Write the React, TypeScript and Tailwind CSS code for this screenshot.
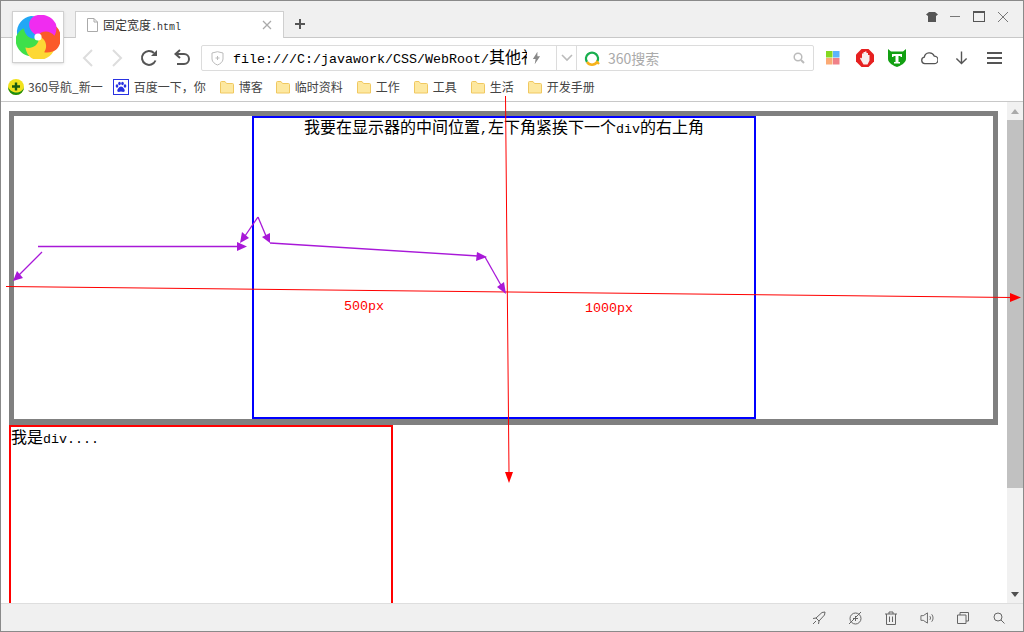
import React from 'react';

const cjk = { fontFamily: '"Noto Sans CJK SC", sans-serif' };

function Logo() {
	const colors = ['#f02cf0', '#fb5a2a', '#fdd835', '#3fe04a', '#22a7f5'];
	return (
		<svg width="44" height="44" viewBox="-22 -22 44 44">
			{[4, 3, 2, 1, 0].map((i) => (
				<path
					key={i}
					transform={`rotate(${i * 72 - 18})`}
					fill={colors[i]}
					d="M0 -1 C -8 -9 -6 -19 3 -21 C 12 -22 20 -15 21 -7 C 21 -3 19 1 16 4 C 14 -2 6 -6 0 -1Z"
				/>
			))}
			<circle r="3.600" fill="#fff" />
		</svg>
	);
}

function Folder() {
	return (
		<svg width="16" height="14" viewBox="0 0 16 14" className="shrink-0">
			<path d="M1.500 13V2.500A1 1 0 0 1 2.500 1.500H6L7.500 3.500H13.500A1 1 0 0 1 14.500 4.500V13Z" fill="#fde8a0" stroke="#f0c860" />
		</svg>
	);
}

function Bookmark({ icon, text, className }: any) {
	return (
		<div className={`flex items-center ${className}`}>
			{icon}
			<span className="text-[12px] leading-none text-[#444] whitespace-nowrap ml-[4px]" style={cjk}>
				{text}
			</span>
		</div>
	);
}

function Annotations() {
	const purple = '#a818d8';
	const head = (pts: string, color: string) => <polygon points={pts} fill={color} />;
	return (
		<svg className="absolute -left-px -top-px pointer-events-none" width="1024" height="632">
			<g stroke="#ff0000" strokeWidth="1" fill="none">
				<line x1="6" y1="286.500" x2="1011" y2="297.500" />
				<line x1="505.500" y1="96" x2="509" y2="473" />
			</g>
			{head('1021,297.500 1010,293 1010,302', '#ff0000')}
			{head('509,483 505,472 513,472', '#ff0000')}
			<g stroke={purple} strokeWidth="1.300" fill="none">
				<line x1="38" y1="246.500" x2="240" y2="246.500" />
				<line x1="42" y1="252" x2="18" y2="276" />
				<line x1="258" y1="217" x2="245" y2="236" />
				<line x1="258" y1="217" x2="266" y2="236" />
				<line x1="270" y1="243" x2="478" y2="256" />
				<line x1="485" y1="257" x2="502" y2="287" />
			</g>
			{head('247,246.500 237,242 237,251', purple)}
			{head('13,281 17,271 23,278', purple)}
			{head('240,243 242,232 249,238', purple)}
			{head('270,243 262,237 270,233', purple)}
			{head('487,257 476,261 477,252', purple)}
			{head('506,294 497,287 504,282', purple)}
		</svg>
	);
}

export default function App() {
	return (
		<div className="relative w-[1024px] h-[632px] overflow-hidden bg-white border border-[#8a8a8a] flex flex-col" style={{ fontFamily: '"Liberation Mono", "Noto Sans CJK SC", monospace' }}>
			{/* tab strip */}
			<div className="h-[37px] shrink-0 bg-[#f0f0f0] border-b border-[#c8c8c8] flex items-end pl-[74px]">
				<div className="w-[209px] h-[27px] bg-white border border-b-0 border-[#cfcfcf] flex items-center pl-[10px] pr-[11px] -mb-px">
					<svg width="13" height="14" viewBox="0 0 13 14" fill="none">
						<path d="M1.500 .5H8L11.500 4V13.500H1.500ZM8 .5V4H11.500" stroke="#aaa" />
					</svg>
					<span className="ml-[4px] text-[12px] text-[#333] whitespace-nowrap" style={cjk}>固定宽度<span className="font-['Liberation_Mono'] text-[10px]">.html</span></span>
					<svg width="10" height="10" viewBox="0 0 10 10" className="ml-auto">
						<path d="M1 1L9 9M9 1L1 9" stroke="#aaa" strokeWidth="1.300" />
					</svg>
				</div>
				<svg width="12" height="12" viewBox="0 0 12 12" className="ml-[10px] mb-[7px]">
					<path d="M6 1V11M1 6H11" stroke="#555" strokeWidth="2" />
				</svg>
				<div className="ml-auto mr-[15px] mb-[15px] flex items-center self-end">
					<svg width="12" height="10" viewBox="0 0 12 10"><path d="M3 0H9L12 2.500L10 4V10H2V4L0 2.500Z" fill="#555" /></svg>
					<div className="ml-[12px] w-[10px] h-px bg-[#777]" />
					<div className="ml-[13px] w-[12px] h-[11px] border border-t-2 border-[#555]" />
					<svg width="10" height="10" viewBox="0 0 10 10" className="ml-[13px]"><path d="M0 0L10 10M10 0L0 10" stroke="#777" /></svg>
				</div>
			</div>
			{/* logo sits over the tabs */}
			<div className="absolute left-[11px] top-[10px] w-[52px] h-[52px] bg-white border border-[#d0d0d0] shadow-sm flex items-center justify-center">
				<Logo />
			</div>
			{/* toolbar */}
			<div className="h-[34px] shrink-0 flex items-center pt-[6px]">
				<div className="flex items-center ml-[79px]">
					<svg width="16" height="18" viewBox="0 0 16 18"><path d="M12 1L4 9L12 17" fill="none" stroke="#ddd" strokeWidth="2" /></svg>
					<svg width="16" height="18" viewBox="0 0 16 18" className="ml-[13px]"><path d="M4 1L12 9L4 17" fill="none" stroke="#ddd" strokeWidth="2" /></svg>
					<svg width="18" height="18" viewBox="0 0 18 18" className="ml-[15px]"><path d="M15.500 11.500A7 7 0 1 1 14 4" fill="none" stroke="#555" strokeWidth="2" /><path d="M17 1V7H11Z" fill="#555" /></svg>
					<svg width="18" height="18" viewBox="0 0 18 18" className="ml-[15px]"><path d="M3 5H11A5 5 0 0 1 11 15H4" fill="none" stroke="#555" strokeWidth="2" /><path d="M7 1L2.500 5L7 9" fill="none" stroke="#555" strokeWidth="2" /></svg>
				</div>
				<div className="ml-[10px] w-[613px] h-[26px] border border-[#dcdcdc] rounded-[2px] flex items-center overflow-hidden">
					<div className="w-[354px] flex items-center pl-[9px] shrink-0 overflow-hidden">
						<svg width="13" height="15" viewBox="0 0 13 15" className="shrink-0"><path d="M1 2L6.500 .7L12 2V8C12 11 9 13 6.500 14C4 13 1 11 1 8Z" fill="none" stroke="#bbb" /><path d="M4.500 7H8.500M6.500 5V9" stroke="#bbb" /></svg>
						<div className="ml-[9px] w-[294px] shrink-0 overflow-hidden text-[13.330px] leading-[20px] text-black whitespace-nowrap">file:///C:/javawork/CSS/WebRoot/<span className="text-[16px]" style={cjk}>其他礼</span></div>
						<svg width="9" height="14" viewBox="0 0 10 14" className="ml-[5px] shrink-0"><path d="M6 0L1 8H4L3 14L9 5H6Z" fill="#888" /></svg>
					</div>
					<div className="w-[21px] h-full border-x border-[#dcdcdc] flex items-center justify-center shrink-0">
						<svg width="12" height="8" viewBox="0 0 12 8"><path d="M1 1L6 6L11 1" fill="none" stroke="#bbb" strokeWidth="1.600" /></svg>
					</div>
					<div className="flex-1 flex items-center pl-[7px] pr-[8px]">
						<svg width="16" height="16" viewBox="0 0 16 16">
							<path d="M13 12A6 6 0 1 0 3 12" fill="none" stroke="#1aaf50" strokeWidth="2.400" />
							<path d="M3 12A6 6 0 0 0 13 12L15 14" fill="none" stroke="#f6b21a" strokeWidth="2.400" />
						</svg>
						<span className="ml-[8px] text-[14px] leading-none text-[#aaa]" style={cjk}>360搜索</span>
						<svg width="12" height="12" viewBox="0 0 12 12" className="ml-auto"><circle cx="5" cy="5" r="3.800" fill="none" stroke="#bbb" strokeWidth="1.500" /><path d="M8 8L11 11" stroke="#bbb" strokeWidth="2" /></svg>
					</div>
				</div>
				<div className="ml-[12px] flex items-center">
					<svg width="14" height="14" viewBox="0 0 14 14"><rect width="6.500" height="6.500" fill="#84d820" /><rect x="7" width="6.500" height="6.500" fill="#5cb4fa" /><rect y="7" width="6.500" height="6.500" fill="#fbaa74" /><rect x="7" y="7" width="6.500" height="6.500" fill="#f08088" /></svg>
					<svg width="18" height="18" viewBox="0 0 18 18" className="ml-[16px]"><path d="M5.500 0H12.500L18 5.500V12.500L12.500 18H5.500L0 12.500V5.500Z" fill="#e62020" /><path d="M4 9.500L5 8.500L6 9.500V4.500H7.500V3H9V2.500H10.500V4H12V6H13.500V11.500L11.500 15.500H7.500Z" fill="#f8eeee" /></svg>
					<svg width="18" height="18" viewBox="0 0 18 18" className="ml-[14px]"><path d="M0 0L3 2.500H15L18 0V10C18 14 12 17 9 18C6 17 0 14 0 10Z" fill="#12a012" /><path d="M4 5H14V8H12.500V7H10.500V13H12V14.500H6V13H7.500V7H5.500V8H4Z" fill="#fff" /></svg>
					<svg width="17" height="14" viewBox="0 0 18 14" className="ml-[15px]"><path d="M4 13A3.500 3.500 0 0 1 3.500 6.100A5.500 5.500 0 0 1 14 5A4 4 0 0 1 14 13Z" fill="none" stroke="#555" strokeWidth="1.400" /></svg>
					<svg width="13" height="14" viewBox="0 0 14 14" className="ml-[17px]"><path d="M7 0V13M1.500 7.500L7 13L12.500 7.500" fill="none" stroke="#555" strokeWidth="1.500" /></svg>
					<svg width="15" height="12" viewBox="0 0 15 12" className="ml-[19px]"><path d="M0 1H15M0 6H15M0 11H15" stroke="#555" strokeWidth="2" /></svg>
				</div>
			</div>
			{/* bookmarks */}
			<div className="h-[30px] shrink-0 flex items-center border-b border-[#c8c8c8]">
				<Bookmark
					className="ml-[7px]"
					icon={
						<svg width="16" height="16" viewBox="0 0 16 16"><circle cx="8" cy="8" r="8" fill="#f2e21c" /><path d="M0 8A8 8 0 0 0 16 8C15 12 11 14 7 13.500C4 13 1.500 11 0 8Z" fill="#1c8c14" /><path d="M8 3.500V11.500M4 7.500H12" stroke="#1a5a10" strokeWidth="2.400" /></svg>
					}
					text="360导航_新一"
				/>
				<Bookmark
					className="ml-[10px]"
					icon={
						<svg width="16" height="16" viewBox="0 0 16 16" className="mr-[1px]"><rect x=".5" y=".5" width="15" height="15" fill="#fff" stroke="#2932e1" /><g fill="#2932e1"><ellipse cx="4" cy="7" rx="1.300" ry="1.700" /><ellipse cx="6.500" cy="4.500" rx="1.300" ry="1.700" /><ellipse cx="9.500" cy="4.500" rx="1.300" ry="1.700" /><ellipse cx="12" cy="7" rx="1.300" ry="1.700" /><path d="M8 7.500C10 7.500 12.500 11 11.500 12.500C10.500 13.500 9 12.500 8 12.500C7 12.500 5.500 13.500 4.500 12.500C3.500 11 6 7.500 8 7.500Z" /></g></svg>
					}
					text="百度一下，你"
				/>
				<Bookmark className="ml-[13px]" icon={<Folder />} text="博客" />
				<Bookmark className="ml-[12px]" icon={<Folder />} text="临时资料" />
				<Bookmark className="ml-[13px]" icon={<Folder />} text="工作" />
				<Bookmark className="ml-[13px]" icon={<Folder />} text="工具" />
				<Bookmark className="ml-[13px]" icon={<Folder />} text="生活" />
				<Bookmark className="ml-[13px]" icon={<Folder />} text="开发手册" />
			</div>
			{/* page */}
			<div className="flex-1 min-h-0 flex">
				<div className="flex-1 min-w-0 overflow-hidden pl-[8px] pt-[9px]">
					<div className="w-[989px] h-[314px] border-[5px] border-b-[6px] border-[#808080] pl-[238px] box-border">
						<div className="w-[504px] h-[303px] border-2 border-[#0000ff] text-center text-[16px] leading-[16px] text-black whitespace-nowrap">
							<span style={cjk}>我要在显示器的中间位置</span><span className="text-[13.330px]">,</span><span style={cjk}>左下角紧挨下一个</span><span className="text-[13.330px]">div</span><span style={cjk}>的右上角</span>
						</div>
					</div>
					<div className="w-[384px] h-[300px] border-2 border-[#ff0000] text-[16px] leading-[18px] text-black">
						<span style={cjk}>我是</span><span className="text-[13.330px]">div....</span>
					</div>
				</div>
				{/* scrollbar */}
				<div className="w-[16px] shrink-0 bg-[#f1f1f1] flex flex-col items-center">
					<div className="h-[18px] shrink-0 flex items-center justify-center">
						<svg width="8" height="5" viewBox="0 0 8 5"><path d="M0 5L4 0L8 5Z" fill="#aaa" /></svg>
					</div>
					<div className="w-full h-[368px] shrink-0 bg-[#c1c1c1]" />
					<div className="mt-auto h-[17px] flex items-center justify-center">
						<svg width="8" height="5" viewBox="0 0 8 5"><path d="M0 0L4 5L8 0Z" fill="#505050" /></svg>
					</div>
				</div>
			</div>
			{/* status bar */}
			<div className="h-[28px] shrink-0 bg-[#f0f0f0] border-t border-[#dedede] flex items-center justify-end pr-[17px] gap-[22px]">
				<svg width="14" height="14" viewBox="0 0 14 14"><path d="M4 7L10 1.500L13 1L12.500 4L7 10ZM4 7L1 7.500M7 10L6.500 13M4 10L1 13" fill="none" stroke="#666" /></svg>
				<svg width="14" height="14" viewBox="0 0 14 14"><circle cx="7.500" cy="7.500" r="5.500" fill="none" stroke="#666" /><path d="M1 13L13 1M5 7.500H10M7.500 5V10" stroke="#666" /></svg>
				<svg width="14" height="14" viewBox="-1 0 14 14"><path d="M0 3H12M4 3V1H8V3M1.500 3V13.500H10.500V3M4.500 5.500V11M7.500 5.500V11" fill="none" stroke="#666" /></svg>
				<svg width="14" height="14" viewBox="0 0 15 14"><path d="M1 4.500H3.500L8 1.500V12.500L3.500 9.500H1ZM10.500 5C11.500 6 11.500 8 10.500 9M12.500 3C14.500 5 14.500 9 12.500 11" fill="none" stroke="#666" /></svg>
				<svg width="14" height="14" viewBox="-1 -1 14 14"><path d="M3 3V.5H11.500V9H9M.5 3H9V11.500H.5Z" fill="none" stroke="#666" /></svg>
				<svg width="14" height="14" viewBox="-1 -1 14 14"><circle cx="5" cy="5" r="4" fill="none" stroke="#666" /><path d="M8 8L11.500 11.500" stroke="#666" /></svg>
			</div>
			<div className="absolute left-[343px] top-[299px] text-[13.330px] leading-none text-[#ff0000]">500px</div>
			<div className="absolute left-[584px] top-[301px] text-[13.330px] leading-none text-[#ff0000]">1000px</div>
			<Annotations />
		</div>
	);
}
